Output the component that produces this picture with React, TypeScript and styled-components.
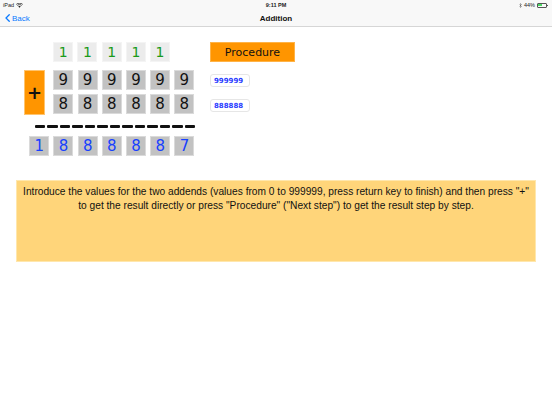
import * as React from "react";
import { styled, createGlobalStyle } from "styled-components";

const GlobalStyle = createGlobalStyle`
  * { box-sizing: border-box; }
  html, body {
    margin: 0;
    padding: 0;
    background: #ffffff;
    font-family: "DejaVu Sans", "Liberation Sans", sans-serif;
  }
`;

const carries = ["1", "1", "1", "1", "1"];
const first = ["9", "9", "9", "9", "9", "9"];
const second = ["8", "8", "8", "8", "8", "8"];
const result = ["1", "8", "8", "8", "8", "8", "7"];

const App = () => {
  return (
    <>
      <GlobalStyle />
      <Screen>
        <StatusBar>
          <StatusSide>
            iPad
            <svg width="7" height="5" viewBox="0 0 14 10">
              <path d="M7 9.5 L4.6 6.8 A3.4 3.4 0 0 1 9.4 6.8 Z" fill="#222" />
              <path d="M2.6 4.8 A6.3 6.3 0 0 1 11.4 4.8" stroke="#222" strokeWidth="1.6" fill="none" />
              <path d="M0.6 2.8 A9.2 9.2 0 0 1 13.4 2.8" stroke="#222" strokeWidth="1.6" fill="none" />
            </svg>
          </StatusSide>
          <Clock>9:11 PM</Clock>
          <StatusSide $right>
            <svg width="3" height="5" viewBox="0 0 6 10">
              <path d="M1 3 L5 7 L3 9 V1 L5 3 L1 7" stroke="#555" strokeWidth="1" fill="none" />
            </svg>
            44%
            <Battery>
              <BatteryLevel style={{ width: "44%" }} />
            </Battery>
          </StatusSide>
        </StatusBar>

        <NavBar>
          <BackButton>
            <svg width="5" height="8" viewBox="0 0 10 16">
              <path d="M8.5 1.5 L2 8 L8.5 14.5" stroke="#0a7aff" strokeWidth="2.6" fill="none" strokeLinecap="round" strokeLinejoin="round" />
            </svg>
            Back
          </BackButton>
          <NavTitle>Addition</NavTitle>
        </NavBar>

        <Main>
          <Sum>
            <CarryRow>
              {carries.map((d, i) => (
                <Cell key={i} $kind="carry">{d}</Cell>
              ))}
            </CarryRow>

            <AddendBlock>
              <PlusButton>+</PlusButton>
              <AddendStack>
                <DigitRow>
                  {first.map((d, i) => (
                    <Cell key={i} $kind="addend">{d}</Cell>
                  ))}
                </DigitRow>
                <DigitRow>
                  {second.map((d, i) => (
                    <Cell key={i} $kind="addend">{d}</Cell>
                  ))}
                </DigitRow>
              </AddendStack>
            </AddendBlock>

            <Rule>
              {Array.from({ length: 13 }).map((_, i) => (
                <Dash key={i} />
              ))}
            </Rule>

            <ResultRow>
              {result.map((d, i) => (
                <Cell key={i} $kind="result">{d}</Cell>
              ))}
            </ResultRow>
          </Sum>

          <Controls>
            <ProcedureButton>Procedure</ProcedureButton>
            <ValueField>999999</ValueField>
            <ValueField>888888</ValueField>
          </Controls>
        </Main>

        <InfoBox>
          Introduce the values for the two addends (values from 0 to 999999, press return key to finish) and then press "+"
          <br />
          to get the result directly or press "Procedure" ("Next step") to get the result step by step.
        </InfoBox>
      </Screen>
    </>
  );
};

export default App;

const Screen = styled.div`
  width: 552px;
  height: 414px;
  background: #ffffff;
  overflow: hidden;
`;

const StatusBar = styled.div`
  height: 10px;
  padding: 0 3px;
  display: flex;
  align-items: center;
  justify-content: space-between;
  font-family: "Liberation Sans", sans-serif;
  font-size: 5.5px;
  color: #222;
  background: #f8f8f8;
`;

const StatusSide = styled.div<{ $right?: boolean }>`
  width: 60px;
  display: flex;
  align-items: center;
  gap: 2px;
  justify-content: ${(p) => (p.$right ? "flex-end" : "flex-start")};
`;

const Clock = styled.div`
  font-weight: bold;
`;

const Battery = styled.div`
  width: 10px;
  height: 5px;
  border: 0.6px solid #555;
  border-radius: 1px;
  padding: 0.5px;
  margin-right: 2px;
  position: relative;

  &::after {
    content: "";
    position: absolute;
    right: -2px;
    top: 1.2px;
    width: 1px;
    height: 1.6px;
    background: #555;
  }
`;

const BatteryLevel = styled.div`
  height: 100%;
  background: #4cd964;
`;

const NavBar = styled.div`
  height: 17px;
  position: relative;
  display: flex;
  align-items: center;
  justify-content: center;
  background: #f8f8f8;
  border-bottom: 1px solid #d6d6d6;
  font-family: "Liberation Sans", sans-serif;
`;

const BackButton = styled.div`
  position: absolute;
  left: 5px;
  top: 0;
  height: 100%;
  display: flex;
  align-items: center;
  gap: 2px;
  font-size: 8px;
  color: #0a7aff;
`;

const NavTitle = styled.div`
  font-size: 8px;
  font-weight: bold;
  color: #111;
`;

const Main = styled.div`
  display: flex;
  padding: 15px 0 0 24px;
`;

const Sum = styled.div`
  width: 171px;
  display: flex;
  flex-direction: column;
`;

const CarryRow = styled.div`
  display: flex;
  gap: 4.2px;
  padding-left: 29.3px;
`;

const AddendBlock = styled.div`
  display: flex;
  margin-top: 8px;
`;

const PlusButton = styled.div`
  width: 21px;
  height: 45px;
  margin-right: 8.4px;
  display: flex;
  align-items: center;
  justify-content: center;
  background: #ff9500;
  border: 1px solid #ffc46e;
  font-size: 18px;
  font-weight: bold;
  color: #111;
  line-height: 1;
`;

const AddendStack = styled.div`
  display: flex;
  flex-direction: column;
  gap: 4px;
`;

const DigitRow = styled.div`
  display: flex;
  gap: 4.2px;
`;

const ResultRow = styled.div`
  display: flex;
  gap: 4.2px;
  padding-left: 5.3px;
  margin-top: 8px;
`;

const cellStyles = {
  carry: { bg: "#ececec", color: "#1a9a1a", size: 14 },
  addend: { bg: "#c2c2c2", color: "#111111", size: 15 },
  result: { bg: "#c2c2c2", color: "#1640ff", size: 15 },
};

const Cell = styled.div<{ $kind: "carry" | "addend" | "result" }>`
  width: 20px;
  height: 20px;
  display: flex;
  align-items: center;
  justify-content: center;
  background: ${(p) => cellStyles[p.$kind].bg};
  border: 1px solid ${(p) => (p.$kind === "carry" ? "#f4f4f4" : "#dadada")};
  color: ${(p) => cellStyles[p.$kind].color};
  font-size: ${(p) => cellStyles[p.$kind].size}px;
  line-height: 1;
`;

const Rule = styled.div`
  display: flex;
  gap: 2px;
  margin: 10px 0 0 11px;
`;

const Dash = styled.div`
  width: 10.5px;
  height: 3px;
  border-radius: 1px;
  background: #111;
`;

const Controls = styled.div`
  margin-left: 15px;
  display: flex;
  flex-direction: column;
  align-items: flex-start;
`;

const ProcedureButton = styled.div`
  width: 85px;
  height: 20px;
  display: flex;
  align-items: center;
  justify-content: center;
  background: #ff9500;
  border: 1px solid #ffb347;
  font-size: 11px;
  color: #111;
`;

const ValueField = styled.div`
  width: 40px;
  height: 13px;
  margin-top: 12px;
  padding-left: 3px;
  display: flex;
  align-items: center;
  background: #ffffff;
  border: 1px solid #e6e6e6;
  border-radius: 3px;
  font-size: 7px;
  font-weight: bold;
  color: #2a3cff;
`;

const InfoBox = styled.div`
  margin: 24px 16px 0 16px;
  height: 82px;
  padding-top: 4px;
  background: #ffd57a;
  border: 1px solid #ffe7ad;
  text-align: center;
  font-family: "Liberation Sans", sans-serif;
  font-size: 10.2px;
  line-height: 14px;
  color: #111;
`;
